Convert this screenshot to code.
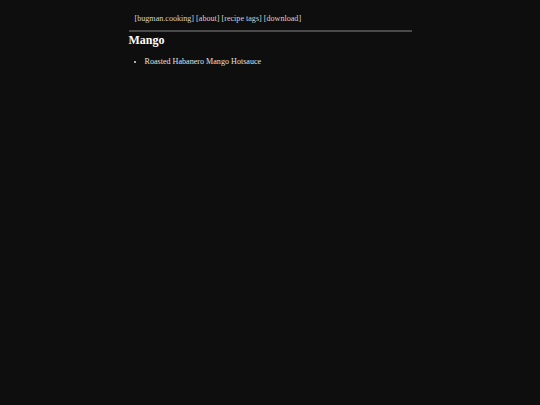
export default function App() {
  return (
    <div className="min-h-[405px] bg-[#0e0e0e] text-[#d0d0d0] antialiased" style={{ fontFamily: '"Liberation Serif", serif' }}>
      <div className="mx-auto w-[283px] pt-[14px]">
        <nav className="pl-[6px] text-[8.1px] leading-[10px] text-[#d4d4d4]">
          <a>[bugman.cooking]</a> <a>[about]</a> <a>[recipe tags]</a> <a>[download]</a>
        </nav>
        <div className="mt-[6px] h-[2px] bg-[#4a4a4a]" />
        <h1 className="mt-[1px] text-[12px] font-bold leading-[14px] text-white">Mango</h1>
        <ul className="mt-[10px] list-disc pl-[16px] text-[8.1px] leading-[10px] text-[#e0e0e0]">
          <li>Roasted Habanero Mango Hotsauce</li>
        </ul>
      </div>
    </div>
  );
}
